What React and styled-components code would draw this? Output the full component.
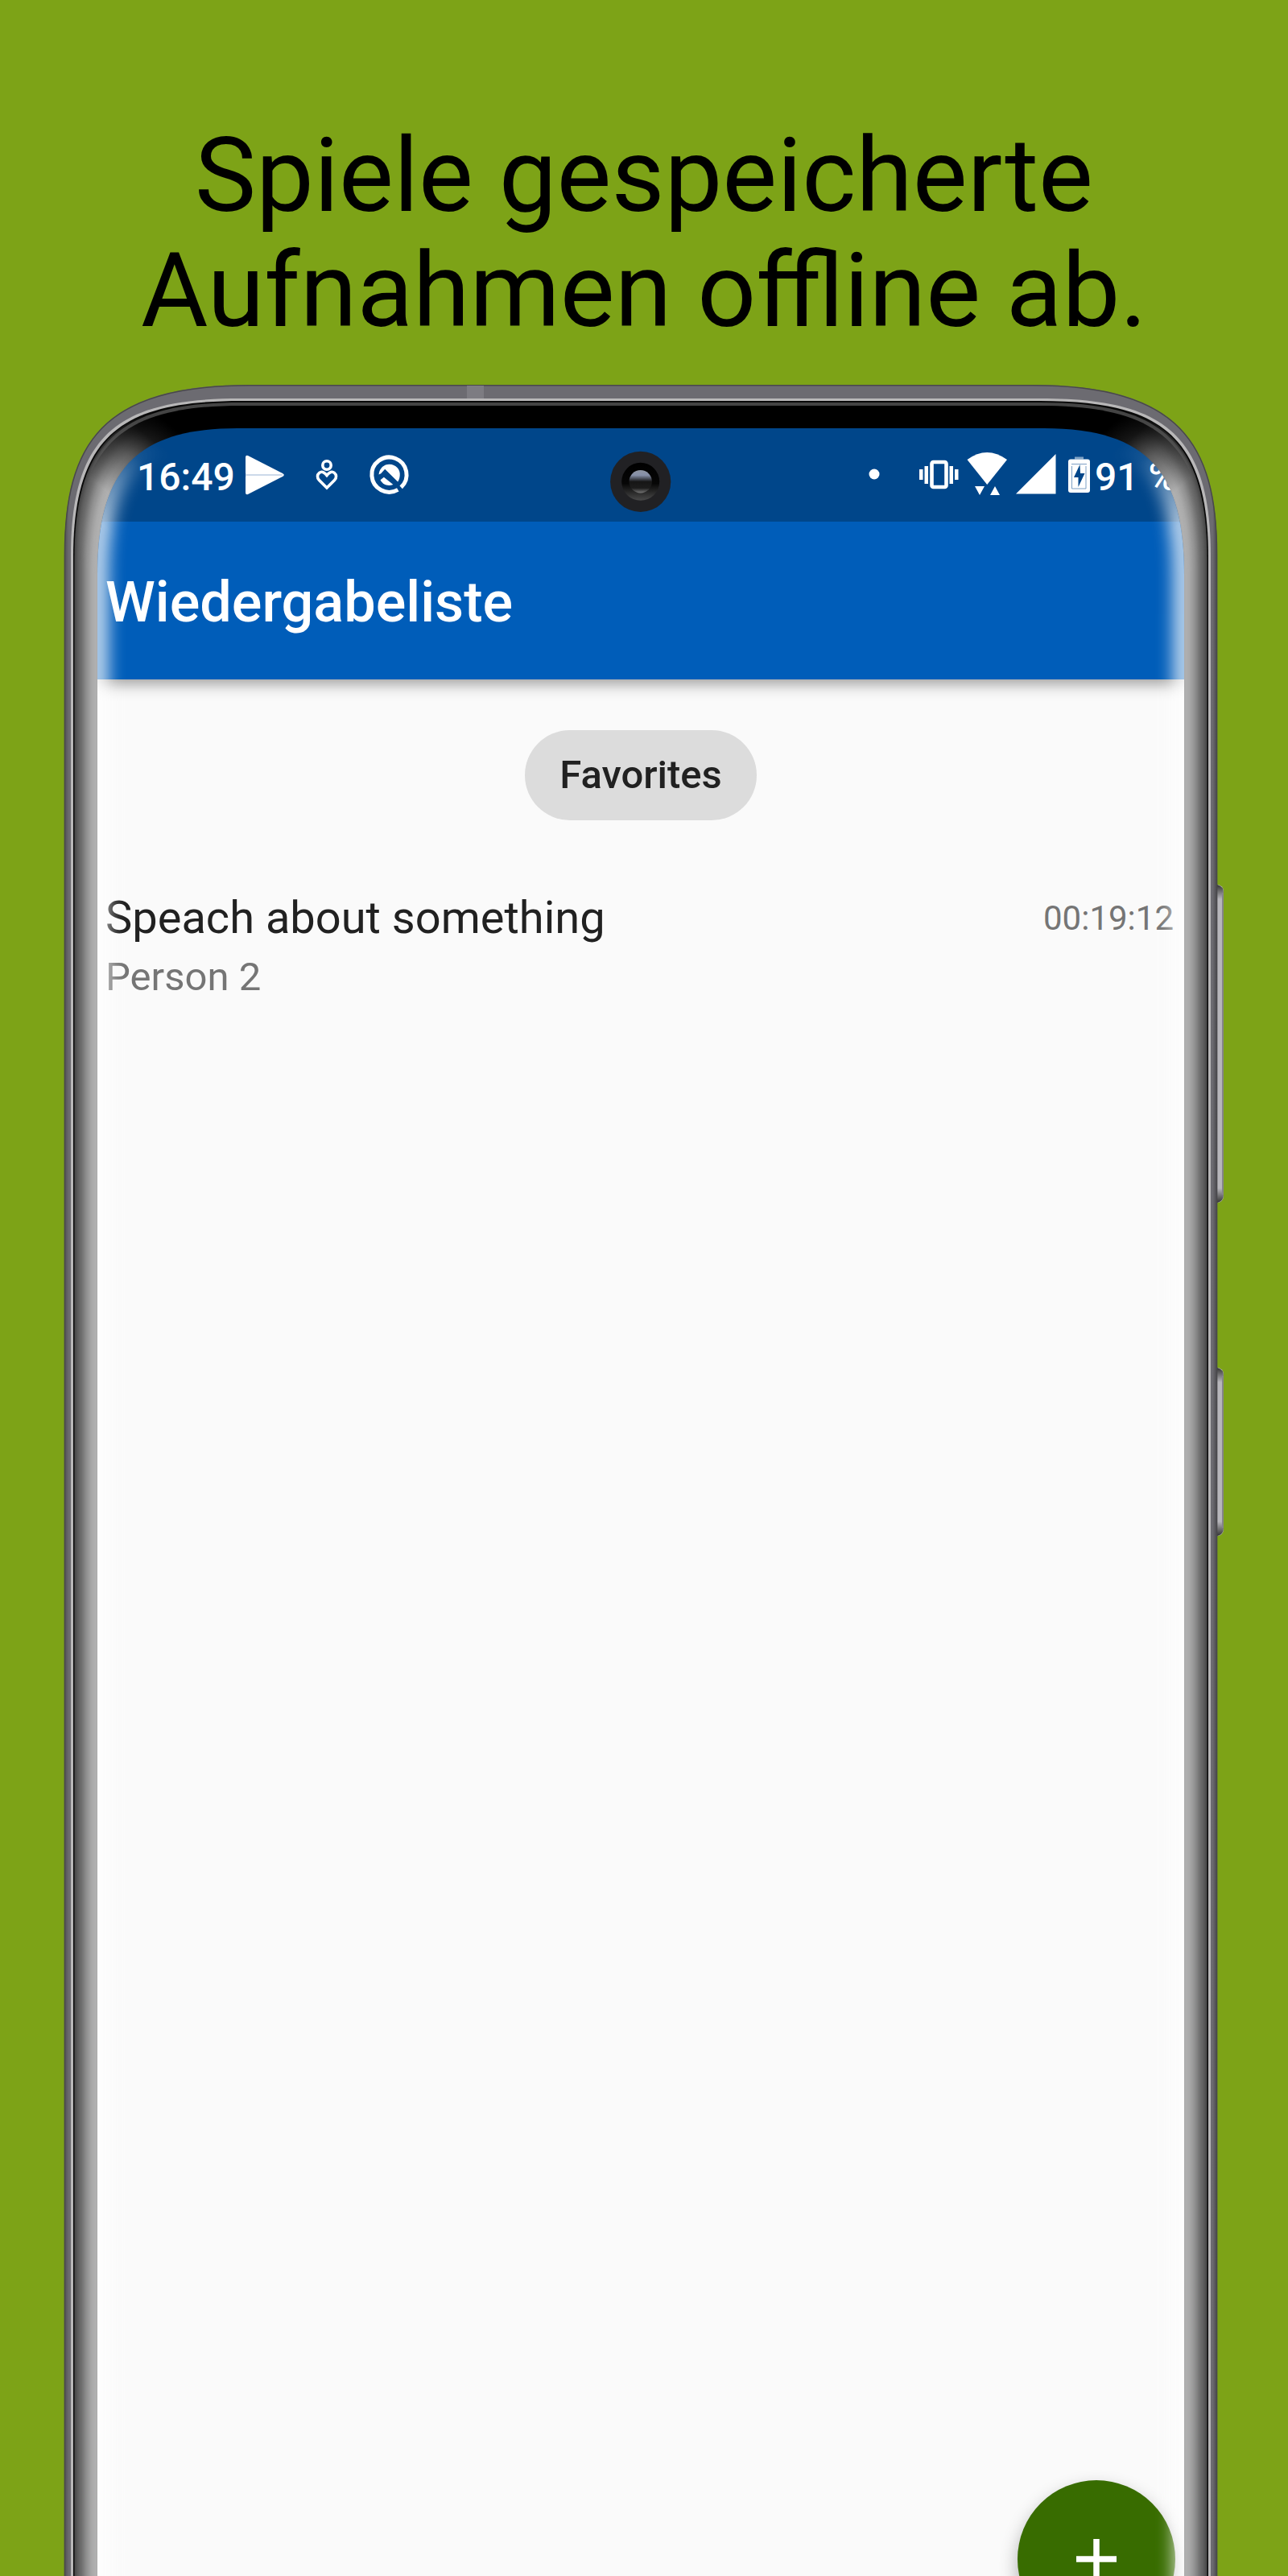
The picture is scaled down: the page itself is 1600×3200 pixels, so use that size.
import React from "react";
import styled, { createGlobalStyle } from "styled-components";

const GlobalStyle = createGlobalStyle`
  html, body { margin: 0; padding: 0; background: #7da317; }
  * { box-sizing: border-box; }
`;

const Page = styled.main`
  width: 1600px;
  height: 3200px;
  overflow: hidden;
  background: #7da317;
  font-family: Roboto, "Liberation Sans", sans-serif;
  display: flex;
  flex-direction: column;
  align-items: center;
`;

const Headline = styled.h1`
  margin: 0;
  height: 478px;
  padding-top: 147px;
  font-size: 128px;
  font-weight: 400;
  line-height: 142.5px;
  color: #000;
  text-align: center;
  white-space: nowrap;
  align-self: stretch;
  flex: none;
`;

const Phone = styled.section`
  position: relative;
  width: 1600px;
  height: 2722px;
  flex: none;
  padding: 54px 129px 0 121px;
`;

const Bezel = styled.svg`
  position: absolute;
  left: 0;
  top: 0;
  z-index: 2;
  pointer-events: none;
`;

const Screen = styled.div`
  height: 100%;
  overflow: hidden;
  border-radius: 80px 80px 0 0;
  background: #fafafa;
  display: flex;
  flex-direction: column;
`;

const StatusBar = styled.div`
  height: 116px;
  flex: none;
  background: #00468a;
  color: #fff;
  display: flex;
  justify-content: space-between;
  padding: 0 0 0 49px;
`;

const StatusGroup = styled.div`
  display: flex;
  align-items: center;
  height: 116px;
`;

const StatusText = styled.span`
  font-size: 48px;
  font-weight: 500;
  line-height: 56px;
  margin-top: 6px;
  white-space: pre;
  width: ${(p) => p.$width}px;
`;

const StatusIcons = styled.svg`
  display: block;
  flex: none;
`;

const AppBar = styled.header`
  height: 196px;
  flex: none;
  background: #005db9;
  box-shadow: 0 5px 18px rgba(0, 0, 0, 0.4);
  clip-path: inset(0 0 -40px 0);
  display: flex;
  align-items: center;
  padding: 4px 10px 0;
  z-index: 1;
`;

const Title = styled.h2`
  margin: 0;
  font-size: 70.2px;
  font-weight: 500;
  line-height: 82px;
  color: #fff;
`;

const Filters = styled.div`
  display: flex;
  justify-content: center;
  padding: 63px 0 0;
  flex: none;
`;

const Chip = styled.button`
  border: 0;
  width: 288px;
  height: 112px;
  border-radius: 56px;
  background: #dcdcdc;
  color: #212121;
  font: 500 49px/56px Roboto, "Liberation Sans", sans-serif;
  padding: 0;
`;

const Recording = styled.article`
  display: flex;
  justify-content: space-between;
  padding: 86px 13px 0 10px;
`;

const RecordingTitle = styled.h3`
  margin: 0;
  font-size: 56px;
  font-weight: 400;
  line-height: 70px;
  color: #212121;
`;

const Speaker = styled.p`
  margin: 3px 0 0;
  font-size: 49px;
  line-height: 72px;
  color: #757575;
`;

const Duration = styled.time`
  font-size: 42px;
  line-height: 71px;
  color: #757575;
`;

const AddButton = styled.button`
  position: absolute;
  left: 1264px;
  top: 2603px;
  width: 196px;
  height: 196px;
  border: 0;
  border-radius: 50%;
  padding: 0;
  background: #386c00;
  box-shadow: 0 10px 22px rgba(0, 0, 0, 0.3);
  display: flex;
  align-items: center;
  justify-content: center;
`;

const Camera = styled.svg`
  position: absolute;
  left: 757px;
  top: 82px;
`;

/* Device outlines: [side x, side y, control x, control y, top x, top y] */
const OUTER = [80, 212, 126, 73, 310, 0];
const SILVER = [88, 212, 153, 56, 300, 17];
const SCREEN = [121, 237, 164, 111, 295, 54];
const AXIS = 1592;

const outline = ([x, y, cx, cy, tx, ty]) => {
  const bottom = 2900;
  return `M${x} ${bottom}V${y}C${x} ${cy} ${cx} ${ty} ${tx} ${ty}H${AXIS - tx}C${AXIS - cx} ${ty} ${AXIS - x} ${cy} ${AXIS - x} ${y}V${bottom}Z`;
};

const mix = (a, b, t) => a.map((v, i) => v + (b[i] - v) * t);

const SHADES = [
  [0, 72], [0.12, 92], [0.3, 112], [0.5, 143], [0.75, 170], [0.9, 176], [1, 172],
];
const shade = (t) => {
  const i = Math.max(1, SHADES.findIndex(([s]) => s >= t));
  const [t0, v0] = SHADES[i - 1];
  const [t1, v1] = SHADES[i];
  const v = Math.round(v0 + ((v1 - v0) * (t - t0)) / (t1 - t0));
  return `rgb(${v},${v},${v})`;
};
const RINGS = Array.from({ length: 30 }, (_, i) => i / 29);
const screenPath = outline(SCREEN);

function SideMask({ id, from, to }) {
  const fade = (
    <>
      <stop offset="0" stopColor="#000" />
      <stop offset=".25" stopColor="#222" />
      <stop offset=".55" stopColor="#888" />
      <stop offset="1" stopColor="#fff" />
    </>
  );
  return (
    <>
      <linearGradient id={`${id}L`} gradientUnits="userSpaceOnUse" x1={from[0]} y1={from[1]} x2={to[0]} y2={to[1]}>{fade}</linearGradient>
      <linearGradient id={`${id}R`} gradientUnits="userSpaceOnUse" x1={AXIS - from[0]} y1={from[1]} x2={AXIS - to[0]} y2={to[1]}>{fade}</linearGradient>
      <mask id={id} maskUnits="userSpaceOnUse" x="0" y="0" width="1600" height="2722">
        <rect width="796" height="2722" fill={`url(#${id}L)`} />
        <rect x="796" width="804" height="2722" fill={`url(#${id}R)`} />
      </mask>
    </>
  );
}

function PhoneBezel() {
  return (
    <Bezel width="1600" height="2722" viewBox="0 0 1600 2722">
      <defs>
        <SideMask id="sides" from={[204, 44]} to={[130, 130]} />
        <SideMask id="glow" from={[190, 66]} to={[116, 166]} />
        <mask id="hole" maskUnits="userSpaceOnUse" x="0" y="0" width="1600" height="2722">
          <rect width="1600" height="2722" fill="#fff" />
          <path d={screenPath} fill="#000" />
        </mask>
        <clipPath id="glass"><path d={screenPath} /></clipPath>
        <filter id="soft" filterUnits="userSpaceOnUse" x="0" y="0" width="1600" height="2860">
          <feGaussianBlur stdDeviation="10" />
        </filter>
        <linearGradient id="metal" gradientUnits="userSpaceOnUse" x1="80" y1="0" x2="1512" y2="0">
          <stop offset="0" stopColor="#504f53" />
          <stop offset=".004" stopColor="#6c6b71" />
          <stop offset=".996" stopColor="#6c6b71" />
          <stop offset="1" stopColor="#48474b" />
        </linearGradient>
        <linearGradient id="key" x1="0" y1="0" x2="0" y2="1">
          <stop offset="0" stopColor="#333" />
          <stop offset="1" stopColor="#b7b6bb" />
        </linearGradient>
        <linearGradient id="keyEnd" x1="0" y1="1" x2="0" y2="0">
          <stop offset="0" stopColor="#333" />
          <stop offset="1" stopColor="#b7b6bb" />
        </linearGradient>
      </defs>
      {[[621, 395], [1221, 209]].map(([y, h]) => (
        <g key={y}>
          <rect x="1500" y={y} width="20" height={h} rx="8" fill="#b7b6bb" />
          <path d={`M1508 ${y}h4q8 2 8 10v8h-12z`} fill="url(#key)" />
          <path d={`M1508 ${y + h}h4q8 -2 8 -10v-8h-12z`} fill="url(#keyEnd)" />
          <path d={`M1519 ${y + 10}v${h - 20}`} stroke="#858489" strokeWidth="2" />
        </g>
      ))}
      <g mask="url(#hole)">
        <path d={outline(OUTER)} fill="url(#metal)" />
        <path d={outline(mix(OUTER, SILVER, 0.05))} fill="none" stroke="#49484b" strokeWidth="1.5" />
        <rect x="580" y="1" width="21" height="16" fill="#7d7c82" />
        <path d={outline(SILVER)} fill="#b8b7b8" />
        <path d={outline([91, 214, 155, 59, 300, 20])} fill="#080808" />
        <path d={outline([94, 216, 158, 62, 300, 22])} fill="#444" />
        <path d={outline([95, 219, 161, 66, 300, 26])} fill="#000" />
        <g mask="url(#sides)">
          {RINGS.map((t) => (
            <path key={t} d={outline(mix([92.5, 216, 157, 60, 300, 20], SCREEN, t))} fill={shade(t)} />
          ))}
        </g>
      </g>
      <g clipPath="url(#glass)">
        <g mask="url(#glow)" opacity=".74">
          <path d={screenPath} fill="none" stroke="#fff" strokeWidth="28" filter="url(#soft)" />
        </g>
      </g>
    </Bezel>
  );
}

function CameraLens() {
  return (
    <Camera width="78" height="78" viewBox="0 0 78 78">
      <defs>
        <linearGradient id="rim" x1="0" y1="0" x2="0" y2="1">
          <stop offset="0" stopColor="#000" />
          <stop offset=".55" stopColor="#060606" />
          <stop offset="1" stopColor="#4a4a4a" />
        </linearGradient>
        <linearGradient id="lens" x1="0" y1="0" x2="0" y2="1">
          <stop offset="0" stopColor="#8f95a3" />
          <stop offset=".22" stopColor="#8690a8" />
          <stop offset=".5" stopColor="#161616" />
          <stop offset=".78" stopColor="#1c1c1c" />
          <stop offset="1" stopColor="#777" />
        </linearGradient>
      </defs>
      <circle cx="38.7" cy="38.3" r="37.6" fill="#212124" />
      <circle cx="38.7" cy="38.3" r="23.5" fill="url(#rim)" />
      <circle cx="38.7" cy="38.3" r="14.2" fill="url(#lens)" />
    </Camera>
  );
}

function NotificationIcons() {
  return (
    <StatusIcons width="220" height="116" viewBox="300 532 220 116" fill="#fff">
      <path d="M305 568q0-3 3-2l43 22q3 2 1 2h-45q-2 0-2-2z" />
      <path d="M305 612q0 3 3 2l43-22q3-2 1-2h-45q-2 0-2 2z" />
      <path d="M305 590h46" stroke="#ccd9ea" strokeWidth="2" />
      <g fill="none" stroke="#fff" strokeWidth="3.6">
        <circle cx="406" cy="578" r="5.2" />
        <path d="M406 606l-9.500-9.500c-3-3-2.500-7 .2-9.200 2.800-2.200 5.800-1 9.300 3.200 3.500-4.200 6.500-5.400 9.300-3.200 2.700 2.200 3.200 6.200.2 9.200z" />
      </g>
      <path d="M494.300 608.300A21.600 21.600 0 1 1 498.200 605.400" fill="none" stroke="#fff" strokeWidth="5" />
      <path d="M470.500 589.500c1-8 6.500-12.700 13.200-12.700 8 0 14 6.500 13 14-.3 3-1 5.500-2.500 7.700l-16-15.700-5 5.500z" />
      <path d="M472.500 596.200l4.400-3.500 11.500 9.200c-6.500 2.500-13 .2-15.900-5.700z" />
    </StatusIcons>
  );
}

function SystemIcons() {
  return (
    <StatusIcons width="282" height="116" viewBox="1078 532 282 116" fill="#fff">
      <circle cx="1086" cy="589" r="6.500" />
      <rect x="1157.500" y="574" width="18" height="31" rx="2" fill="none" stroke="#fff" strokeWidth="4.600" />
      <path d="M1142 583h4.500v13h-4.500zM1148.500 579h4.500v22h-4.500zM1179.500 579h4.500v22h-4.500zM1186 583h4.500v13h-4.500z" />
      <path d="M1201.500 571q24.500-18 49.500 0l-24.800 31z" />
      <path d="M1211 604h12l-6 11zM1230 615h12l-6-11z" />
      <path d="M1262 613.500h49.500v-49.500z" />
      <path d="M1335 567.500h11v3h-11z" opacity=".5" />
      <rect x="1327" y="570.500" width="27" height="41.500" rx="3" />
      <path d="M1331 576.500h19M1331.500 579v28h17.500v-28" fill="none" stroke="#7c9fc4" strokeWidth="1" />
      <path d="M1341.500 577l-7.500 16h5.500v12l8-17h-5.500z" fill="#00468a" />
    </StatusIcons>
  );
}

export default function App() {
  return (
    <Page>
      <GlobalStyle />
      <Headline>Spiele gespeicherte<br />Aufnahmen offline ab.</Headline>
      <Phone>
        <Screen>
          <StatusBar>
            <StatusGroup>
              <StatusText $width={130}>16:49</StatusText>
              <NotificationIcons />
            </StatusGroup>
            <StatusGroup>
              <SystemIcons />
              <StatusText $width={111}>91 %</StatusText>
            </StatusGroup>
          </StatusBar>
          <AppBar><Title>Wiedergabeliste</Title></AppBar>
          <Filters><Chip>Favorites</Chip></Filters>
          <Recording>
            <div>
              <RecordingTitle>Speach about something</RecordingTitle>
              <Speaker>Person 2</Speaker>
            </div>
            <Duration>00:19:12</Duration>
          </Recording>
        </Screen>
        <AddButton aria-label="+">
          <svg width="50" height="50" viewBox="0 0 50 50">
            <path d="M25 0v50M0 25h50" stroke="#fff" strokeWidth="7.500" />
          </svg>
        </AddButton>
        <CameraLens />
        <PhoneBezel />
      </Phone>
    </Page>
  );
}
